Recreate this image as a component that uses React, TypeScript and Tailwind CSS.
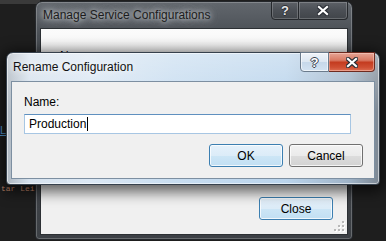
import React from "react";

function CloseGlyph() {
  return (
    <svg width="12" height="11" viewBox="0 0 12 11">
      <path d="M2 2 L10 9 M10 2 L2 9" stroke="#2b2f36" strokeWidth="4.4" strokeLinecap="square" />
      <path d="M2 2 L10 9 M10 2 L2 9" stroke="#ffffff" strokeWidth="2.2" strokeLinecap="square" />
    </svg>
  );
}

function Btn({ children, def }: { children: React.ReactNode; def?: boolean }) {
  return (
    <div
      className={
        def
          ? "w-[74px] h-[23px] rounded-[3px] border border-[#3c7fb1] bg-[linear-gradient(180deg,#e5f1fb_0%,#dcecf8_50%,#cde6f6_50%,#c1dff3_100%)] shadow-[inset_0_0_0_1px_rgba(255,255,255,0.75)] flex items-center justify-center"
          : "w-[74px] h-[23px] rounded-[3px] border border-[#707070] bg-[linear-gradient(180deg,#f2f2f2_0%,#ebebeb_50%,#dddddd_50%,#d2d2d2_100%)] shadow-[inset_0_0_0_1px_rgba(255,255,255,0.75)] flex items-center justify-center"
      }
    >
      <span className="text-[12px] leading-[14px] text-black">{children}</span>
    </div>
  );
}

function SizeGrip() {
  const dots: [number, number][] = [
    [8, 0],
    [8, 4],
    [4, 4],
    [8, 8],
    [4, 8],
    [0, 8],
  ];
  return (
    <svg width="11" height="11" viewBox="0 0 11 11">
      {dots.map(([x, y], i) => (
        <g key={i}>
          <rect x={x + 1} y={y + 1} width="2" height="2" fill="#ffffff" />
          <rect x={x} y={y} width="2" height="2" fill="#b8b8b8" />
        </g>
      ))}
    </svg>
  );
}

function BackWindow() {
  return (
    <div className="absolute left-[35px] top-[1px] w-[318px] h-[239px] flex flex-col rounded-t-[7px] rounded-b-[4px] border border-[#24272b] bg-[linear-gradient(180deg,#62676d_0%,#4a4f55_14%,#42464b_40%,#3c4045_100%)] shadow-[inset_0_0_0_1px_rgba(255,255,255,0.22)]">
      <div className="flex h-[26px] items-start">
        <span className="self-center ml-[7px] text-[12px] leading-[14px] text-[#1c1c1c] [text-shadow:0_0_5px_rgba(220,224,228,0.95),0_0_10px_rgba(200,205,210,0.9),0_0_14px_rgba(190,195,200,0.7)]">
          Manage Service Configurations
        </span>
        <div className="ml-auto mr-[4px] -mt-px flex">
          <div className="w-[28px] h-[19px] rounded-bl-[4px] border border-[#25282c] bg-[linear-gradient(180deg,#5d6167_0%,#4b4f55_50%,#41454a_100%)] shadow-[inset_0_0_0_1px_rgba(255,255,255,0.2)] flex items-center justify-center">
            <span className="text-[13px] leading-[13px] font-bold text-[#e8e8e8] [text-shadow:1px_0_0_#2b2f36,-1px_0_0_#2b2f36,0_1px_0_#2b2f36,0_-1px_0_#2b2f36]">?</span>
          </div>
          <div className="w-[49px] h-[19px] rounded-br-[4px] border border-l-0 border-[#25282c] bg-[linear-gradient(180deg,#5d6167_0%,#4b4f55_50%,#41454a_100%)] shadow-[inset_0_0_0_1px_rgba(255,255,255,0.2)] flex items-center justify-center">
            <CloseGlyph />
          </div>
        </div>
      </div>
      <div className="relative mx-[4px] mb-[4px] flex-1 flex flex-col border border-[#2c3034] bg-[linear-gradient(180deg,#fbfbfb_0%,#f0f0f0_30%)] pl-[19px] pt-[20px] pr-[14px] pb-[14px]">
        <span className="text-[12px] leading-[14px] text-black">Name:</span>
        <div className="flex-1" />
        <div className="flex justify-end">
          <Btn def>Close</Btn>
        </div>
        <div className="absolute right-[2px] bottom-[2px]">
          <SizeGrip />
        </div>
      </div>
    </div>
  );
}

function FrontWindow() {
  return (
    <div className="absolute left-[6px] top-[52px] w-[374px] h-[133px] flex flex-col rounded-t-[7px] rounded-b-[4px] border border-[#36414d] bg-[linear-gradient(180deg,rgba(255,255,255,0.35)_0%,rgba(255,255,255,0)_45%),linear-gradient(90deg,#aeb7c0_0%,#d6e2ee_6%,#dbe7f3_22%,#c8ddf0_45%,#bad4ec_75%,#9fb3c7_92%,#7d8894_100%)] shadow-[0_3px_14px_4px_rgba(0,0,0,0.6),inset_0_0_0_1px_rgba(255,255,255,0.55)]">
      <div className="flex h-[28px] items-start">
        <span className="self-center ml-[6px] text-[12px] leading-[14px] text-[#111] [text-shadow:0_0_6px_rgba(255,255,255,0.9),0_0_10px_rgba(255,255,255,0.7)]">
          Rename Configuration
        </span>
        <div className="ml-auto mr-[4px] -mt-px flex">
          <div className="w-[29px] h-[20px] rounded-bl-[4px] border border-[#6b7b8c] bg-[linear-gradient(180deg,#f0f4f9_0%,#dce7f2_48%,#c6d8ea_52%,#d3e3f2_100%)] shadow-[inset_0_0_0_1px_rgba(255,255,255,0.6)] flex items-center justify-center">
            <span className="text-[13px] leading-[13px] font-bold text-white [text-shadow:1px_0_0_#39424e,-1px_0_0_#39424e,0_1px_0_#39424e,0_-1px_0_#39424e]">?</span>
          </div>
          <div className="w-[46px] h-[20px] rounded-br-[4px] border border-l-0 border-[#6e2a1f] bg-[linear-gradient(180deg,#e6a596_0%,#d97a64_40%,#c43c20_52%,#cf4f33_80%,#dc6e52_100%)] shadow-[inset_0_0_0_1px_rgba(255,220,210,0.45)] flex items-center justify-center">
            <CloseGlyph />
          </div>
        </div>
      </div>
      <div className="mx-[4px] mb-[5px] flex-1 flex flex-col border border-[#7d8fa1] bg-[#f0f0f0] pl-[12px] pt-[13px] pr-[11px]">
        <span className="text-[12px] leading-[14px] text-black">Name:</span>
        <div className="mt-[5px] w-[327px] h-[20px] border border-[#a7c6e3] border-t-[#5f90bf] bg-white flex items-center pl-[4px]">
          <span className="text-[12px] leading-[14px] text-black">Production</span>
          <span className="ml-px w-px h-[14px] bg-black" />
        </div>
        <div className="mt-[10px] flex justify-end gap-[6px]">
          <Btn def>OK</Btn>
          <Btn>Cancel</Btn>
        </div>
      </div>
    </div>
  );
}

export default function App() {
  return (
    <div className="relative w-[386px] h-[241px] overflow-hidden bg-[#1e1e1e] font-['Liberation_Sans',Arial,sans-serif]">
      <div className="absolute left-0 top-0 w-[40px] h-[4px] bg-[#3a3a3a]" />
      <span className="absolute left-0 top-[124px] text-[11px] leading-[13px] text-[#569cd6] underline">L</span>
      <span className="absolute left-[1px] top-[184px] font-['Liberation_Mono',monospace] text-[8px] leading-[9px] text-[#c8896d]">
        tar Lei
      </span>
      <BackWindow />
      <FrontWindow />
    </div>
  );
}
